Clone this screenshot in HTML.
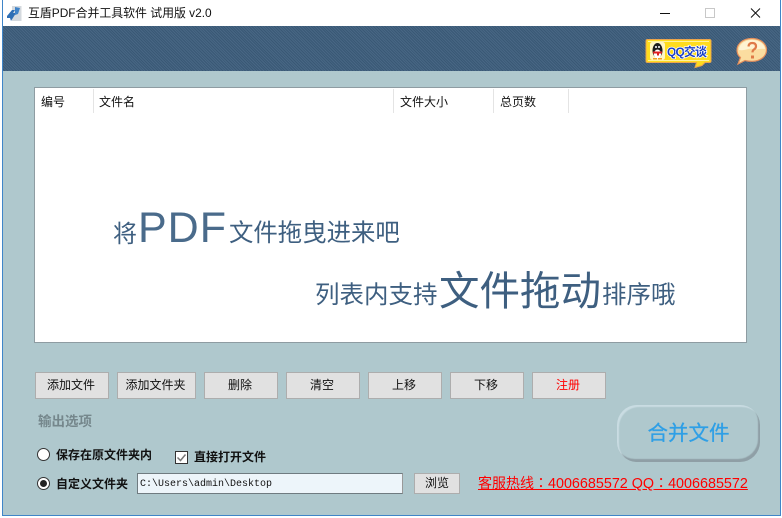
<!DOCTYPE html>
<html><head><meta charset="utf-8"><style>
html,body{margin:0;padding:0;background:#fff}
body{width:782px;height:518px;position:relative;overflow:hidden;font-family:"Liberation Sans","Noto Sans CJK SC",sans-serif;color:#000}
.a{position:absolute;white-space:nowrap}
#win{left:2px;top:0;width:777px;height:515px;border:1px solid #3f85c8;border-top:0;background:#afc8cd}
#title{left:3px;top:0;width:777px;height:26px;background:#fff}
#head{left:3px;top:26px;width:777px;height:45px;background-color:#3d5d7c;background-image:repeating-linear-gradient(45deg,rgba(255,255,255,.06) 0 1px,rgba(0,0,0,.06) 1px 2px)}
.btn{top:372px;height:25px;background:#e1e1e1;border:1px solid #adadad;text-align:center;font-size:12px;line-height:25px;color:#111;text-indent:-2px}
.th{top:94px;font-size:12px;line-height:16px;color:#111}
.sep{top:89px;width:1px;height:24px;background:#e4e4e4}
.big{color:#3e5f80;line-height:1;font-family:"Liberation Sans","Noto Sans CJK SC",sans-serif}
.tc{font-family:"Noto Sans CJK TC",sans-serif;font-size:14px}
</style></head><body>
<div class="a" id="win"></div>
<div class="a" id="title"></div>
<svg class="a" style="left:6px;top:5px" width="16" height="18" viewBox="0 0 16 18"><rect x="6" y="1" width="9.500" height="15" fill="#d4d9de"/><path d="M1 11l5-6h3l-2 3h3l-5 8-1-3H1z" fill="#2f6fb5"/><path d="M9 2l5 1-2 6-3 1z" fill="#3f83c8"/></svg>
<div class="a" style="left:28px;top:5px;font-size:11.900px;line-height:16px;color:#111">互盾PDF合并工具软件 试用版 v2.0</div>
<svg class="a" style="left:650px;top:0" width="125" height="26" viewBox="0 0 125 26"><path d="M10 13.500h10" stroke="#111" stroke-width="1"/><rect x="55.500" y="8.500" width="9" height="9" fill="none" stroke="#c8c8c8"/><path d="M101 8.500l9 9M110 8.500l-9 9" stroke="#111" stroke-width="1"/></svg>
<div class="a" id="head"></div>
<svg class="a" style="left:645px;top:38px" width="70" height="32" viewBox="0 0 70 32">
<path d="M2.500 1.500h62q1.500 0 1.500 1.500v20q0 1.500-1.500 1.500H60l-3 3-7 2 1.500-5H2.500q-1.500 0-1.500-1.500V3q0-1.500 1.500-1.500z" fill="#ffdc1e" stroke="#eda54c"/>
<path d="M3 3h61v1H3zM3 22h61v1H3z" fill="#fff3a0"/>
<rect x="5" y="4" width="15" height="18" rx="2.500" fill="#fff6c4"/>
<ellipse cx="12.500" cy="12.500" rx="5" ry="7.500" fill="#1c1c1c"/><ellipse cx="12.500" cy="16" rx="3.700" ry="4.500" fill="#fff"/><path d="M8 13.500h9v2h-3v2h-2v-2H8z" fill="#e02020"/><path d="M8 20h4v1.500H8zM13 20h4v1.500h-4z" fill="#f0a020"/><circle cx="11" cy="9" r="1" fill="#fff"/><circle cx="14" cy="9" r="1" fill="#fff"/>
<text x="22" y="18" font-family="Liberation Sans,Noto Sans CJK SC,sans-serif" font-size="12" font-weight="700" fill="#1b3fc4" stroke="#fff" stroke-width="1.500" paint-order="stroke" textLength="40">QQ交谈</text></svg>
<svg class="a" style="left:735px;top:37px" width="33" height="30" viewBox="0 0 33 30"><path d="M17 1.500C8.500 1.500 2 6.500 2 13c0 3.500 1.500 6 3.500 7.500L3 27l7-3.500q3 .8 7 .8c8.300 0 14.500-5 14.500-11.300S25.300 1.500 17 1.500z" fill="#fbdda0" stroke="#e58f5c" stroke-width="1.200"/><path d="M4 13C4 7 10 3 17 3s12.500 4 13 9c-5-1-7 1-12 0-5-1-8 2-14 1z" fill="#fff3d2"/><path d="M13.500 9.500q.3-3.500 3.800-3.500t3.700 3.200q0 2-2 3.200-1.500.9-1.500 3" fill="none" stroke="#df7a48" stroke-width="2.200"/><rect x="16" y="18.500" width="3" height="3" fill="#df7a48"/></svg>

<div class="a" style="left:34px;top:87px;width:711px;height:254px;background:#fff;border:1px solid #8e9ca2"></div>
<div class="a th" style="left:41px">编号</div>
<div class="a sep" style="left:93px"></div>
<div class="a th" style="left:99px">文件名</div>
<div class="a sep" style="left:393px"></div>
<div class="a th" style="left:400px">文件大小</div>
<div class="a sep" style="left:493px"></div>
<div class="a th" style="left:500px">总页数</div>
<div class="a sep" style="left:568px"></div>

<div class="a big" style="left:113px;top:223px;font-size:24px">将</div>
<div class="a big" style="left:138px;top:207px;font-size:43px;letter-spacing:1px;font-weight:300;color:#4a6b8b">PDF</div>
<div class="a big" style="left:229px;top:222px;font-size:24.400px">文件拖曳进来吧</div>
<div class="a big" style="left:315px;top:284px;font-size:24.500px">列表内支持</div>
<div class="a big" style="left:439px;top:271px;font-size:40.500px">文件拖动</div>
<div class="a big" style="left:602px;top:284px;font-size:24.500px">排序哦</div>

<div class="a btn" style="left:35px;width:72px">添加文件</div>
<div class="a btn" style="left:117px;width:77px">添加文件夹</div>
<div class="a btn" style="left:204px;width:72px">删除</div>
<div class="a btn" style="left:286px;width:72px">清空</div>
<div class="a btn" style="left:368px;width:72px">上移</div>
<div class="a btn" style="left:450px;width:72px">下移</div>
<div class="a btn" style="left:532px;width:72px;color:#f00">注册</div>

<div class="a" style="left:38px;top:414px;font-size:13.500px;line-height:16px;font-weight:700;color:#75878c">输出选项</div>

<div class="a" style="left:37px;top:448px;width:11px;height:11px;border:1px solid #333;border-radius:50%;background:#fff"></div>
<div class="a" style="left:56px;top:447px;font-size:12px;line-height:16px;font-weight:700;color:#111">保存在原文件夹内</div>
<div class="a" style="left:175px;top:451px;width:11px;height:11px;border:1px solid #333;background:#fff"></div>
<svg class="a" style="left:175px;top:451px" width="13" height="13" viewBox="0 0 13 13"><path d="M2.500 6.500l3 3 5-6" fill="none" stroke="#777" stroke-width="1.500"/></svg>
<div class="a" style="left:194px;top:449px;font-size:12px;line-height:16px;font-weight:700;color:#111">直接打开文件</div>

<div class="a" style="left:37px;top:477px;width:11px;height:11px;border:1px solid #333;border-radius:50%;background:#fff"></div>
<div class="a" style="left:40px;top:480px;width:7px;height:7px;border-radius:50%;background:#222"></div>
<div class="a" style="left:56px;top:476px;font-size:12px;line-height:16px;font-weight:700;color:#111">自定义文件夹</div>
<div class="a" style="left:137px;top:473px;width:264px;height:19px;background:#edf5fa;border:1px solid #6f7b80;border-right-color:#999;font-family:'Liberation Mono',monospace;font-size:10px;line-height:19px;text-indent:2px;color:#111"><span style="position:relative;top:1px">C:\Users\admin\Desktop</span></div>
<div class="a" style="left:414px;top:473px;width:44px;height:19px;background:#e1e1e1;border:1px solid #adadad;text-align:center;font-size:12px;line-height:19px;color:#111">浏览</div>
<div class="a" style="left:478px;top:474px;font-size:14.350px;line-height:18px;color:#f00;text-decoration:underline"><span class="tc">客服热线：</span>4006685572 QQ<span class="tc">：</span>4006685572</div>

<div class="a" style="left:617px;top:405px;width:143px;height:57px;box-sizing:border-box;border-radius:20px;background:#afc8cd;box-shadow:inset 2px 2px 1px #c9dce2,inset -2px -3px 1px #8f9fa6;text-align:center;font-size:20.500px;line-height:58px;color:#2e9fe6;-webkit-text-stroke:.3px #2e9fe6">合并文件</div>
</body></html>
